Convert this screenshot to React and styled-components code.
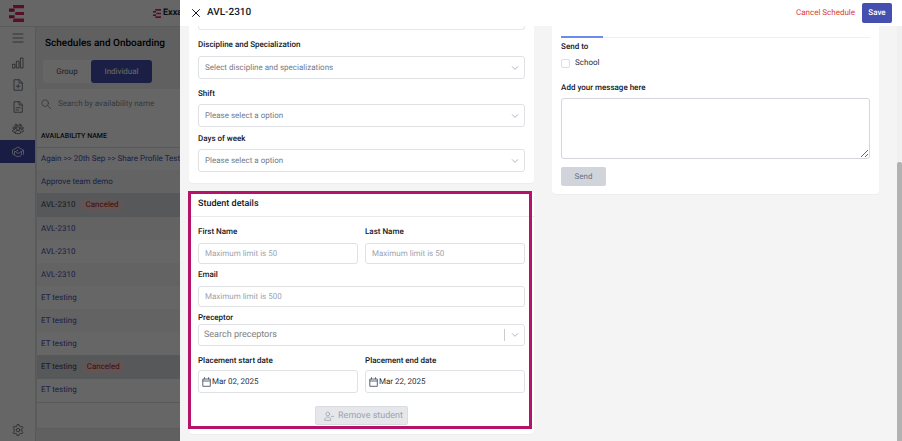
import React from "react";
import styled, { createGlobalStyle, css } from "styled-components";

const GlobalStyle = createGlobalStyle`
  *, *::before, *::after { box-sizing: border-box; }
  body { margin: 0; overflow: hidden; background: #fff; color: #111827; font-family: Roboto, "Liberation Sans", sans-serif; font-size: 8px; line-height: 12px; text-rendering: geometricPrecision; }
  button, input, select, textarea { font: inherit; color: inherit; margin: 0; text-rendering: inherit; }
  button { border: 0; padding: 0; background: none; cursor: pointer; }
`;

const Page = styled.div`
  height: 100vh;
  display: grid;
  grid-template-rows: 27px minmax(0, 1fr);
  overflow: hidden;
`;
const TopBar = styled.header`
  display: flex;
  align-items: center;
  gap: 129px;
  padding-left: 9px;
  border-bottom: 1px solid #e2e2e2;
  background: #fff;
`;
const Brand = styled.div`
  display: flex;
  align-items: center;
  gap: 2px;
  font-size: 9px;
  font-weight: 700;
  color: #1f2937;
`;
const Shell = styled.div`
  display: grid;
  grid-template-columns: 36px minmax(0, 1fr);
  min-height: 0;
`;
const Sidebar = styled.nav`
  display: flex;
  flex-direction: column;
  border-right: 1px solid #dedede;
`;
const NavItem = styled.button`
  display: grid;
  place-items: center;
  height: ${(p) => (p.$active ? "23px" : "22px")};
  color: ${(p) => (p.$active ? "#fff" : "#4b5563")};
  background: ${(p) => (p.$active ? "#3f48a9" : "transparent")};
  margin-top: ${(p) => (p.$last ? "auto" : "0")};
  margin-bottom: ${(p) => (p.$first ? "3px" : "0")};
`;
const Main = styled.main`
  background: #efefef;
  min-width: 0;
`;
const PageTitle = styled.h1`
  margin: 0;
  padding: 10px 9px 9px;
  font-size: 10px;
  line-height: 14px;
  font-weight: 500;
  color: #000;
`;
const Segmented = styled.div`
  display: inline-flex;
  margin-left: 7px;
  border-radius: 3px;
  background: #fff;
`;
const Segment = styled.button`
  width: ${(p) => (p.$active ? "61px" : "48px")};
  height: 23px;
  border-radius: 3px;
  color: ${(p) => (p.$active ? "#fff" : "#4b5563")};
  background: ${(p) => (p.$active ? "#454fb0" : "transparent")};
`;
const ListCard = styled.section`
  margin-top: 6px;
  background: #fff;
  border: 1px solid #e5e5e5;
  border-top: 0;
`;
const SearchRow = styled.label`
  display: flex;
  align-items: center;
  gap: 7px;
  height: 29px;
  padding-left: 4px;
  color: #8b8f98;
  input { flex: 1; border: 0; outline: 0; padding: 0; background: none; }
  input::placeholder { color: #8b8f98; opacity: 1; }
`;
const Table = styled.table`
  width: 100%;
  border-collapse: collapse;
  border-bottom: 1px solid #ddd;
  th { height: 29px; padding: 7px 4px 0; text-align: left; font-size: 7px; font-weight: 500; border-bottom: 1px solid #ddd; }
  td { padding: 0 4px; white-space: nowrap; }
`;
const Row = styled.tr`
  height: ${(p) => (p.$canceled ? "24px" : "23px")};
  background: ${(p) => (p.$canceled ? "#d9dce1" : p.$striped ? "#f8f8f8" : "#fff")};
`;
const TableFooter = styled.div`
  height: 25px;
`;
const RowLink = styled.a`
  color: ${(p) => (p.$muted ? "#374151" : "#454fb0")};
  text-decoration: none;
`;
const Badge = styled.span`
  display: inline-block;
  margin-left: 5px;
  padding: 0 5px;
  border-radius: 6px;
  background: #f3d5d5;
  color: #a62323;
`;

const Backdrop = styled.div`
  position: fixed;
  inset: 0;
  background: rgba(0, 0, 0, 0.6);
`;
const Drawer = styled.aside`
  position: fixed;
  inset: 0 0 0 180px;
  display: grid;
  grid-template-rows: 26px minmax(0, 1fr);
  background: #f4f4f4;
`;
const DrawerHeader = styled.header`
  display: flex;
  align-items: center;
  padding: 0 10px 0 12px;
  background: #fff;
`;
const DrawerTitle = styled.h2`
  margin: 0 auto 0 7px;
  font-size: 10px;
  line-height: 14px;
  font-weight: 500;
`;
const CloseButton = styled.button`
  display: grid;
  place-items: center;
  width: 8px;
  height: 8px;
`;
const TextButton = styled.button`
  color: #dc3d36;
  margin-right: 7px;
`;
const SaveButton = styled.button`
  width: 30px;
  height: 20px;
  border-radius: 2px;
  color: #fff;
  font-weight: 500;
  background: #454fb0;
`;
const DrawerBody = styled.div`
  display: grid;
  grid-template-columns: minmax(0, 1fr) 5px;
  min-height: 0;
`;
const Columns = styled.div`
  display: grid;
  grid-template-columns: 19fr 18fr;
  align-items: start;
  gap: 18px;
  padding: 0 18px 0 9px;
`;
const Stack = styled.div`
  display: grid;
  gap: 8px;
`;
const Card = styled.section`
  position: relative;
  background: #fff;
  border-radius: ${(p) => (p.$cut ? "0 0 4px 4px" : "4px")};
  box-shadow: 0 1px 1px rgba(0, 0, 0, 0.03);
  padding: ${(p) => (p.$flush ? "0 0 9px" : p.$short ? "0 9px 8px" : "0 9px 11px")};
`;
const FieldEnd = styled.div`
  height: 4px;
  border: 1px solid #e5e7eb;
  border-top: 0;
  border-radius: 0 0 3px 3px;
`;
const Field = styled.div`
  display: flex;
  flex-direction: column;
  gap: ${(p) => p.$gap ?? 4}px;
  margin-top: ${(p) => p.$top ?? 0}px;
  label { font-weight: 500; }
`;
const controlFrame = css`
  width: 100%;
  border: 1px solid #dfe1e5;
  border-radius: 3px;
  background: #fff;
  outline: 0;
`;
const Control = styled.div`
  ${controlFrame}
  display: flex;
  align-items: center;
  height: ${(p) => p.$h ?? 23}px;
  padding: 0 5px 0 ${(p) => p.$left ?? 6}px;
  gap: ${(p) => p.$gap ?? 0}px;
  color: #b0b4bb;
  font-size: ${(p) => (p.$large ? "9px" : "8px")};
  select, input { flex: 1; width: 100%; min-width: 0; border: 0; outline: 0; padding: 0; background: none; appearance: none; }
  select { color: #737b8a; }
  input { color: #283042; }
  input::placeholder { color: ${(p) => (p.$large ? "#808080" : "#9ca3af")}; opacity: 1; }
  svg { flex: none; }
`;
const Separator = styled.span`
  width: 1px;
  height: 12px;
  background: #ccc;
  margin-right: 6px;
`;
const CardTitle = styled.h3`
  margin: 0;
  padding: 6px 9px 5px;
  font-size: 9px;
  line-height: 14px;
  font-weight: 500;
  border-bottom: 1px solid #e8eaed;
`;
const FormBody = styled.div`
  padding: 9px 9px 0;
`;
const Pair = styled.div`
  display: grid;
  grid-template-columns: 1fr 1fr;
  gap: 7px;
`;
const Center = styled.div`
  display: flex;
  justify-content: center;
  padding-top: 13px;
`;
const RemoveButton = styled.button`
  display: flex;
  align-items: center;
  gap: 4px;
  height: 19px;
  padding: 0 4px 0 8px;
  border: 1px solid #d9dce1;
  border-radius: 2px;
  background: #e5e7eb;
  color: #9ca3af;
  font-size: 9px;
`;
const Highlight = styled.div`
  position: absolute;
  inset: 0 2px 5px -1px;
  border: 3px solid #b5136a;
  pointer-events: none;
`;
const TabLine = styled.div`
  height: 12px;
  border-bottom: 1px solid #eeeff2;
  display: flex;
  align-items: flex-end;
  &::before { content: ""; width: 42px; height: 2px; margin-bottom: -1px; background: #6d8be8; }
`;
const Legend = styled.div`
  margin-top: 3px;
  font-weight: 500;
`;
const Check = styled.label`
  display: flex;
  align-items: center;
  gap: 5px;
  margin-top: 4px;
  color: #283042;
  input { appearance: none; width: 9px; height: 9px; border: 1px solid #dcdee2; border-radius: 2px; }
`;
const Message = styled.textarea`
  ${controlFrame}
  display: block;
  height: 61px;
  resize: vertical;
  border-color: #d3d6db;
`;
const SendButton = styled.button`
  display: block;
  width: 45px;
  height: 19px;
  margin-top: 8px;
  border-radius: 2px;
  background: #d1d5db;
  color: #6b7280;
`;
const ScrollTrack = styled.div`
  background: #f0f0f0;
  padding-top: 136px;
`;
const ScrollThumb = styled.div`
  height: 100%;
  background: #b2b2b2;
  border-radius: 2px 2px 0 0;
`;

const Icon = ({ size = 12, children, w = 1.5, box = 24 }) => (
  <svg width={size} height={size} viewBox={`0 0 ${box} ${box}`} fill="none" stroke="currentColor" strokeWidth={w} strokeLinecap="round" strokeLinejoin="round" aria-hidden="true">
    {children}
  </svg>
);
const Chevron = () => (
  <Icon size={8} w={3}><path d="m4 8 8 8 8-8" /></Icon>
);
const Calendar = () => (
  <svg width="9" height="10" viewBox="0 0 9 10" fill="none" stroke="#4b5563" strokeWidth="0.9" aria-hidden="true">
    <path d="M.8 2h7.500v7.300H.8zM.8 4h7.500M2.500.3v2M6.500.3v2" />
  </svg>
);
const Logo = ({ width, height }) => (
  <svg width={width} height={height} viewBox="0 0 15 17" aria-hidden="true">
    <path fill="#dc2864" d="M4 0h11v3.2H5.500L4 2.200zM7 6.900h8v3H7L5.500 8.400zM5.500 13.600H15V17H4v-2.200z" />
    <path fill="#c11a57" d="M0 3.600h5.600v3.100H0zM0 10.200h5.600v3.100H0z" />
  </svg>
);

const navIcons = {
  Menu: <path d="M2 4h20M2 12h20M2 20h20" />,
  Reports: <path d="M1.500 14.500H6V22H1.500zM9.500 8.500H14V22H9.500zM17.500 2H22v20h-4.500z" />,
  "New document": <path d="M14 1.500H4v21h16.500V8zM14 1.500V8h6.500M12.200 11v7M8.700 14.500h7" />,
  Documents: <path d="M14 1.500H4v21h16.500V8zM14 1.500V8h6.500M8 13.500h8.500M8 18h5" />,
  Groups: (
    <>
      <circle cx="12" cy="11" r="3.500" /><circle cx="4.500" cy="10" r="2.500" /><circle cx="19.500" cy="10" r="2.500" />
      <circle cx="8" cy="4.500" r="2.200" /><circle cx="16" cy="4.500" r="2.200" />
      <path d="M6.500 20c0-7 11-7 11 0 0 2-11 2-11 0zM5.500 18C2 18 1 17.500 1 16c0-2 2-3 4-3M18.500 18c3.500 0 4.500-.5 4.500-2 0-2-2-3-4-3" />
    </>
  ),
  Schedules: <path d="M1 8.500 12 2l11 6.500L12 15 8 12.500M1 8.500V16l3 2M5 11v7c3 4 11 4 14 0v-7M12 8.500 6 11.500M23 8.500V17" />,
};

const rows = [
  ["Again >> 20th Sep >> Share Profile Testing"],
  ["Approve team demo"],
  ["AVL-2310", true],
  ["AVL-2310"],
  ["AVL-2310"],
  ["AVL-2310"],
  ["ET testing"],
  ["ET testing"],
  ["ET testing"],
  ["ET testing", true],
  ["ET testing"],
];

const SelectField = ({ id, label, text, top, gap }) => (
  <Field $top={top} $gap={gap}>
    <label htmlFor={id}>{label}</label>
    <Control>
      <select id={id}><option>{text}</option></select>
      <Chevron />
    </Control>
  </Field>
);
const TextField = ({ id, label, placeholder, top }) => (
  <Field $top={top} $gap={5}>
    <label htmlFor={id}>{label}</label>
    <Control $h={21}><input id={id} placeholder={placeholder} /></Control>
  </Field>
);
const DateField = ({ id, label, value }) => (
  <Field $top={9} $gap={3}>
    <label htmlFor={id}>{label}</label>
    <Control $left={3} $gap={1}>
      <Calendar />
      <input id={id} defaultValue={value} />
    </Control>
  </Field>
);

export default function App() {
  return (
    <>
      <GlobalStyle />
      <Page>
        <TopBar>
          <Logo width={15} height={17} />
          <Brand><Logo width={8} height={9} />Exxat</Brand>
        </TopBar>
        <Shell>
          <Sidebar>
            {Object.entries(navIcons).map(([name, art], i) => (
              <NavItem key={name} aria-label={name} $first={i === 0} $active={name === "Schedules"}>
                <Icon size={12}>{art}</Icon>
              </NavItem>
            ))}
            <NavItem aria-label="Settings" $last>
              <Icon size={12}>
                <path d="m9.500 4 .8-3h3.400l.8 3 2.500 1.400 3-1 1.800 3-2.300 2.300v4.600l2.300 2.300-1.800 3-3-1-2.500 1.400-.8 3h-3.400l-.8-3L7 18.600l-3 1-1.800-3 2.300-2.300V9.700L2.200 7.400 4 4.400l3 1z" />
                <circle cx="12" cy="12" r="3.500" />
              </Icon>
            </NavItem>
          </Sidebar>
          <Main>
            <PageTitle>Schedules and Onboarding</PageTitle>
            <Segmented>
              <Segment>Group</Segment>
              <Segment $active>Individual</Segment>
            </Segmented>
            <ListCard>
              <SearchRow>
                <Icon size={10} w={2}><circle cx="10" cy="10" r="8" /><path d="m16 16 7 7" /></Icon>
                <input aria-label="Search" placeholder="Search by availability name" />
              </SearchRow>
              <Table>
                <thead><tr><th>AVAILABILITY NAME</th></tr></thead>
                <tbody>
                  {rows.map(([name, canceled], i) => (
                    <Row key={i} $canceled={canceled} $striped={i % 2 === 1}>
                      <td>
                        <RowLink href="#" $muted={canceled}>{name}</RowLink>
                        {canceled && <Badge>Canceled</Badge>}
                      </td>
                    </Row>
                  ))}
                </tbody>
              </Table>
              <TableFooter />
            </ListCard>
          </Main>
        </Shell>
      </Page>
      <Backdrop />
      <Drawer aria-label="AVL-2310">
        <DrawerHeader>
          <CloseButton aria-label="Close">
            <Icon size={8} box={8} w={1}><path d="m.5.5 7 7M7.500.5l-7 7" /></Icon>
          </CloseButton>
          <DrawerTitle>AVL-2310</DrawerTitle>
          <TextButton>Cancel Schedule</TextButton>
          <SaveButton>Save</SaveButton>
        </DrawerHeader>
        <DrawerBody>
          <Columns>
            <Stack>
              <Card $cut>
                <FieldEnd />
                <SelectField id="discipline" label="Discipline and Specialization" text="Select discipline and specializations" top={9} gap={5} />
                <SelectField id="shift" label="Shift" text="Please select a option" top={9} />
                <SelectField id="days" label="Days of week" text="Please select a option" top={6} />
              </Card>
              <Card $flush>
                <CardTitle>Student details</CardTitle>
                <FormBody>
                  <Pair>
                    <TextField id="first" label="First Name" placeholder="Maximum limit is 50" />
                    <TextField id="last" label="Last Name" placeholder="Maximum limit is 50" />
                  </Pair>
                  <TextField id="email" label="Email" placeholder="Maximum limit is 500" top={5} />
                  <Field $top={5} $gap={0}>
                    <label htmlFor="preceptor">Preceptor</label>
                    <Control $h={22} $left={5} $large>
                      <input id="preceptor" placeholder="Search preceptors" />
                      <Separator />
                      <Chevron />
                    </Control>
                  </Field>
                  <Pair>
                    <DateField id="start" label="Placement start date" value="Mar 02, 2025" />
                    <DateField id="end" label="Placement end date" value="Mar 22, 2025" />
                  </Pair>
                  <Center>
                    <RemoveButton disabled>
                      <Icon size={10} w={1.8}><circle cx="9" cy="7" r="4.500" /><path d="M1.500 21.500c0-10 15-10 15 0zM17.500 13H23" /></Icon>
                      Remove student
                    </RemoveButton>
                  </Center>
                </FormBody>
                <Highlight />
              </Card>
            </Stack>
            <Card $cut $short>
              <TabLine />
              <Legend>Send to</Legend>
              <Check><input type="checkbox" />School</Check>
              <Field $top={13}>
                <label htmlFor="message">Add your message here</label>
                <Message id="message" />
              </Field>
              <SendButton disabled>Send</SendButton>
            </Card>
          </Columns>
          <ScrollTrack><ScrollThumb /></ScrollTrack>
        </DrawerBody>
      </Drawer>
    </>
  );
}
